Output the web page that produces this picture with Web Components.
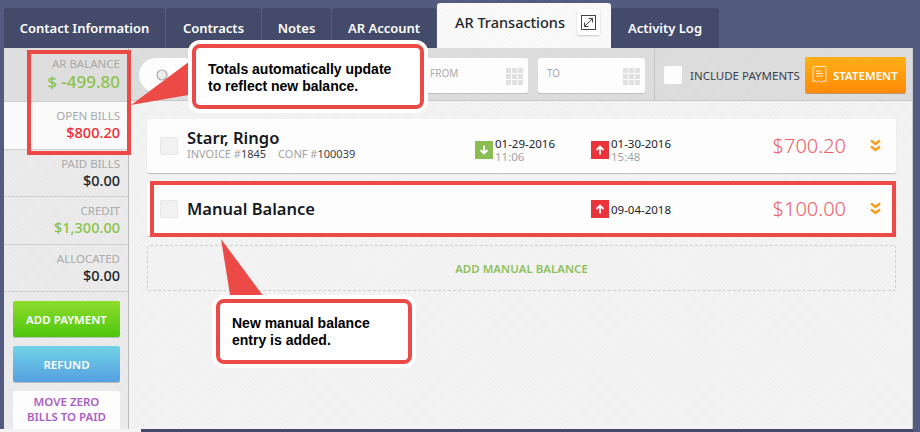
<!DOCTYPE html>
<html><head><meta charset="utf-8">
<style>
html,body{margin:0;height:432px;overflow:hidden;background:#535b80}
body{font-family:"Noto Sans","Open Sans",sans-serif}
</style></head><body>
<ar-app></ar-app>
<script>
const def=(name,css,html,init)=>{customElements.define(name,class extends HTMLElement{
  connectedCallback(){ if(this.shadowRoot) return; const s=this.attachShadow({mode:'open'});
    const a=n=>this.getAttribute(n)||'';
    s.innerHTML=`<style>${css}</style>`+(typeof html==='function'?html(a):html);}
});};
const tex=`background-image:repeating-linear-gradient(45deg,rgba(0,0,0,.012) 0 1px,transparent 1px 3px),repeating-linear-gradient(-45deg,rgba(0,0,0,.012) 0 1px,transparent 1px 3px);`;

def('ar-tab',`:host{display:flex;align-items:center;justify-content:center;height:40px;background:#444a69;color:#fff;font-size:13px;font-weight:600;border-radius:3px 3px 0 0;box-sizing:border-box;margin-right:1px;white-space:nowrap}
:host([active]){height:45px;background:#fbfbfb;color:#23262f;font-size:14.5px;font-weight:500;margin-right:0;justify-content:flex-start;padding:0 0 7px 18px;gap:12px;${tex}}
::slotted(svg){display:block}`,`<slot></slot>`);

def('ar-tabs',`:host{display:flex;align-items:flex-end;height:48px;padding-left:4px;box-sizing:border-box}`,`<slot></slot>`);

def('stat-cell',`:host{display:block;height:47.5px;box-sizing:border-box;border-bottom:1px solid #cfcfcf;text-align:right;padding:7px 8px 0 0;background:#ececec;${tex}}
:host([hi]){height:54px;background:#dedede;padding-top:9px}
:host([lite]){background:#fafafa}
.l{font-size:11.5px;line-height:14px;color:#a9a9a9;text-transform:uppercase}
.v{font-size:14.5px;line-height:19px;font-weight:500;color:var(--c,#20232b)}
:host([hi]) .v{font-size:17px;line-height:22px}`,
a=>`<div class="l">${a('label')}</div><div class="v" style="--c:${a('color')||'#20232b'}">${a('value')}</div>`);

def('side-btn',`:host{display:flex;align-items:center;justify-content:center;text-align:center;width:107px;height:36px;margin:0 0 9px 9px;border-radius:2px;font-size:11.5px;line-height:15px;font-weight:600;color:#fff;text-transform:uppercase;box-shadow:0 1px 0 rgba(0,0,0,.2);box-sizing:border-box}
:host([v=green]){background:linear-gradient(#8fdc2b,#4ec60e)}
:host([v=blue]){background:linear-gradient(#72d2e6,#55a0e0)}
:host([v=white]){background:#fdfdfd;color:#a95fc2;height:44px;padding-top:0;align-items:flex-start;padding-top:3px;border-radius:2px 2px 0 0}`,`<slot></slot>`);

def('ar-sidebar',`:host{display:block;width:125px;box-sizing:border-box;border-right:1px solid #bdbdbd;background:#ececec;overflow:hidden;${tex}}
.b{height:9px}`,`<slot name="stats"></slot><div class="b"></div><slot></slot>`);

def('date-field',`:host{display:block;width:107px;height:35px;background:#fdfdfd;border-radius:2px;box-shadow:0 1px 0 rgba(0,0,0,.12);position:relative;box-sizing:border-box;padding:9px;font-size:10px;line-height:12px;color:#aaa;text-transform:uppercase;flex:none}
.g{position:absolute;right:5px;top:10px;display:grid;grid-template-columns:repeat(3,5px);grid-auto-rows:5px;gap:1px}
.g i{background:#e0e0e0}`,`<slot></slot><div class="g"><i></i><i></i><i></i><i></i><i></i><i></i><i></i><i></i><i></i></div>`);

def('search-field',`:host{display:flex;align-items:center;width:272px;height:34px;background:#fdfdfd;border-radius:17px;flex:none;box-sizing:border-box;padding-left:17px}
svg{display:block}`,`<svg width="12" height="12" viewBox="0 0 12 12"><circle cx="6" cy="6" r="5" fill="#eee" stroke="#aaa" stroke-width="1.2"/></svg>`);

def('statement-btn',`:host{display:flex;align-items:center;gap:6px;width:101px;height:36px;box-sizing:border-box;padding-left:7px;margin-left:9px;background:linear-gradient(#ffb017,#ff8a06);border-radius:2px;color:#fff;font-size:11.5px;font-weight:600;box-shadow:0 1px 0 rgba(160,80,0,.5);flex:none}`,
`<svg width="15" height="18" viewBox="0 0 15 18" fill="none" stroke="#ffe6c0" stroke-width="1"><path d="M1 1.5 Q1 .5 2 .5H13Q14 .5 14 1.5V16l-2-1.5-2.2 2-2.3-2-2.3 2-2.2-2L1 16Z"/><path d="M4 5h5M4 7.5h7M4 10h7" stroke-width="1.2"/></svg><slot></slot>`);

def('ar-toolbar',`:host{display:flex;align-items:center;height:53px;box-sizing:border-box;background:#dedede;border-bottom:1px solid #c9c9c9;padding:2px 0 0 10px;${tex}}
.gap{width:10px;flex:none}
.div{width:1px;height:52px;background:#c4c4c4;margin:-2px 9px 0 9px;flex:none}
.cb{width:18px;height:18px;background:#fdfdfd;border-radius:2px;flex:none}
.lab{font-size:11.5px;color:#3b3f4a;margin-left:8px;white-space:nowrap;width:106px;text-transform:uppercase}`,
`<search-field></search-field><div class="gap"></div><date-field>From</date-field><div class="gap"></div><date-field>To</date-field><div class="div"></div><div class="cb"></div><div class="lab">Include Payments</div><statement-btn>STATEMENT</statement-btn>`);

def('date-stamp',`:host{display:flex;align-items:center;gap:2px;position:absolute;top:var(--t);left:var(--x);font-size:11.5px;line-height:13px;color:#20232b}
.i{width:18px;height:18px;display:flex;align-items:center;justify-content:center;background:var(--b)}
.s{color:#a3a3a3}`,
a=>`<div class="i" style="--b:${a('dir')==='down'?'#8bbd52':'#e8343a'}"><svg width="10" height="10" viewBox="0 0 10 10" fill="none" stroke="#fff" stroke-width="1.8" style="${a('dir')==='down'?'transform:rotate(180deg)':''}"><path d="M5 9.5V1.5M1.5 5L5 1.5 8.5 5"/></svg></div><div>${a('date')}${a('time')?`<div class="s">${a('time')}</div>`:''}</div>`);

def('txn-card',`:host{display:block;position:relative;height:54px;background:#fdfdfd;border-radius:2px;box-shadow:0 1px 1px rgba(0,0,0,.22);flex:none}
.cb{position:absolute;left:13px;top:18px;width:18px;height:18px;background:#f1f1f1;border:1px solid #e8e8e8;box-sizing:border-box;border-radius:2px}
.n{position:absolute;left:40px;top:var(--nt);font-size:16.5px;line-height:20px;font-weight:600;color:#16181f;white-space:nowrap}
.m{position:absolute;left:40px;top:28px;font-size:11px;line-height:14px;color:#a3a3a3;white-space:nowrap}
.m b{font-weight:400;color:#3a3d47}.m span{margin-left:12px}
.a{position:absolute;right:50px;top:13px;font-size:20px;line-height:27px;font-weight:300;color:#ef5f68}
svg.c{position:absolute;right:15px;top:20px}
::slotted([slot=stamp]){}`,
a=>`<div class="cb"></div><div class="n" style="--nt:${a('invoice')?'9px':'17px'}">${a('name')}</div>${a('invoice')?`<div class="m">INVOICE #<b>${a('invoice')}</b><span>CONF #<b>${a('conf')}</b></span></div>`:''}<slot></slot><div class="a">${a('amount')}</div><svg class="c" width="11" height="13" viewBox="0 0 11 13" fill="none" stroke="#f99d1c" stroke-width="2.4"><path d="M1 1.5L5.500 5 10 1.500M1 7.500L5.500 11 10 7.500"/></svg>`);

def('add-row',`:host{display:flex;align-items:center;justify-content:center;height:46px;box-sizing:border-box;border:1px dashed #cfcfcf;border-radius:3px;color:#90c05c;font-size:11.5px;font-weight:600;flex:none}`,`<slot></slot>`);

def('red-box',`:host{display:block;position:absolute;box-sizing:border-box;border:4px solid #ec4a46;pointer-events:none}`,``);

def('call-out',`:host{display:block;position:absolute;box-sizing:border-box;background:#fff;border:4px solid #ec4a46;border-radius:8px;box-shadow:0 0 0 4px #fff;font:bold 14px/17px "Liberation Sans",Arial,sans-serif;color:#000}`,`<slot></slot>`);

def('ar-panel',`:host{display:grid;grid-template-columns:125px 1fr;width:909px;height:381px;margin-left:4px;background:#f4f4f4;border-right:1px solid #c9c9c9;box-sizing:border-box;overflow:hidden}
.c{display:flex;flex-direction:column;min-width:0;${tex}}
.l{display:flex;flex-direction:column;gap:9px;padding:18px 16px 0 18px}`,
`<slot name="side"></slot><div class="c"><ar-toolbar></ar-toolbar><div class="l"><slot></slot></div></div>`);

def('ar-app',`:host{display:block;position:relative;width:920px;height:432px;overflow:hidden}
.strip{display:flex;height:3px;margin-left:0}
.strip i{display:block;width:141px;background:#f4f4f4}.strip b{display:block;width:772px;background:#434967}
svg.p{position:absolute;left:0;top:0;pointer-events:none}
.x{width:23px;height:26px;background:#fff;border-radius:2px;box-shadow:0 1px 2px rgba(0,0,0,.2);display:flex;align-items:center;justify-content:center}`,
`<ar-tabs>
<ar-tab style="width:161px">Contact Information</ar-tab>
<ar-tab style="width:95px">Contracts</ar-tab>
<ar-tab style="width:69px">Notes</ar-tab>
<ar-tab style="width:104px">AR Account</ar-tab>
<ar-tab active style="width:174px">AR Transactions<div class="x"><svg width="15" height="15" viewBox="0 0 15 15" fill="none" stroke="#444" stroke-width="1"><rect x=".5" y=".5" width="14" height="14"/><path d="M3.500 11.500L11.500 3.500M7.500 3.500h4v4M3.500 7.500v4h4"/></svg></div></ar-tab>
<ar-tab style="width:108px;margin:0">Activity Log</ar-tab>
</ar-tabs>
<ar-panel>
<ar-sidebar slot="side">
<stat-cell slot="stats" hi label="AR Balance" value="$ -499.80" color="#8bc34a"></stat-cell>
<stat-cell slot="stats" lite label="Open Bills" value="$800.20" color="#ef2b33"></stat-cell>
<stat-cell slot="stats" label="Paid Bills" value="$0.00"></stat-cell>
<stat-cell slot="stats" label="Credit" value="$1,300.00" color="#8bc34a"></stat-cell>
<stat-cell slot="stats" label="Allocated" value="$0.00"></stat-cell>
<side-btn v="green">Add Payment</side-btn>
<side-btn v="blue">Refund</side-btn>
<side-btn v="white">Move Zero<br>Bills to Paid</side-btn>
</ar-sidebar>
<txn-card name="Starr, Ringo" invoice="1845" conf="100039" amount="$700.20">
<date-stamp style="--x:328px;--t:18px" dir="down" date="01-29-2016" time="11:06"></date-stamp>
<date-stamp style="--x:444px;--t:18px" dir="up" date="01-30-2016" time="15:48"></date-stamp>
</txn-card>
<txn-card name="Manual Balance" amount="$100.00">
<date-stamp style="--x:444px;--t:18px" dir="up" date="09-04-2018"></date-stamp>
<red-box style="left:3px;top:-1px;right:0;bottom:-1px"></red-box>
</txn-card>
<add-row>ADD MANUAL BALANCE</add-row>
</ar-panel>
<div class="strip"><i></i><b></b></div>
<red-box style="left:27px;top:50px;width:104px;height:105px"></red-box>
<svg class="p" width="920" height="432"><polygon points="131,105 194,58 194,94" fill="#ec4a46"/><polygon points="221,239 231,301 267,301" fill="#ec4a46"/></svg>
<call-out style="left:192px;top:44px;width:232px;height:65px;padding:13px 0 0 12px">Totals automatically update<br>to reflect new balance.</call-out>
<call-out style="left:216px;top:299px;width:196px;height:65px;padding:12px 0 0 12px">New manual balance<br>entry is added.</call-out>`);
</script>
</body></html>
